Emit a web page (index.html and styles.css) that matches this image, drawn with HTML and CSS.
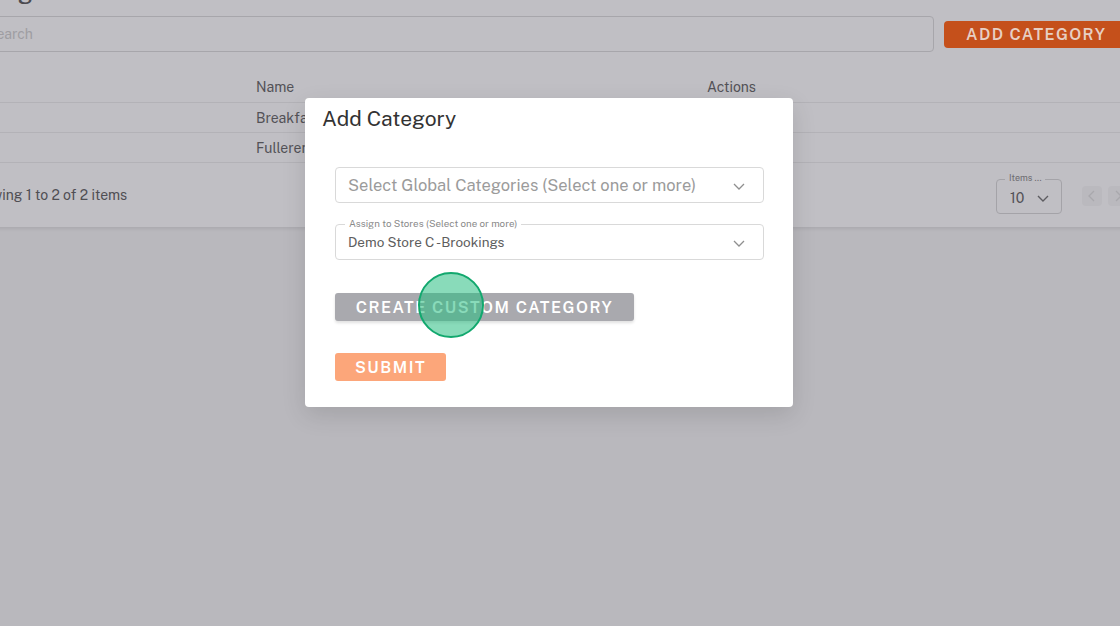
FILE: index.html
```html
<!DOCTYPE html>
<html>
<head>
<meta charset="utf-8">
<link rel="stylesheet" href="styles.css">
</head>
<body>
<div class="page">
  <div class="card">
    <h1 class="title">Categories</h1>
    <div class="toolbar">
      <div class="search">Search</div>
      <button class="btn-add">ADD CATEGORY</button>
    </div>
    <div class="table">
      <div class="row head"><div class="c1"></div><div class="c2">Name</div><div class="c3">Actions</div></div>
      <div class="row"><div class="c1"></div><div class="c2">Breakfast</div><div class="c3"></div></div>
      <div class="row"><div class="c1"></div><div class="c2">Fullerene</div><div class="c3"></div></div>
    </div>
    <div class="footer">
      <div class="showing">Showing 1 to 2 of 2 items</div>
      <div class="items">
        <span class="items-label">Items ...</span>
        <span class="items-val">10</span>
        <svg width="14" height="14" viewBox="0 0 14 14"><path d="M2 5l5 5 5-5" fill="none" stroke="#5d5c61" stroke-width="1.4"/></svg>
      </div>
      <div class="pager">
        <span class="pg"><svg width="10" height="14" viewBox="0 0 10 14"><path d="M7 2L2 7l5 5" fill="none" stroke="#a9a8ad" stroke-width="1.3"/></svg></span>
        <span class="pg"><svg width="10" height="14" viewBox="0 0 10 14"><path d="M3 2l5 5-5 5" fill="none" stroke="#a9a8ad" stroke-width="1.3"/></svg></span>
      </div>
    </div>
  </div>
</div>

<div class="modal">
  <h2 class="modal-title">Add Category</h2>
  <div class="form">
    <div class="select">
      <span class="placeholder">Select Global Categories (Select one or more)</span>
      <svg class="chev" width="14" height="14" viewBox="0 0 14 14"><path d="M2 5l5 5 5-5" fill="none" stroke="#8f8f8f" stroke-width="1.3"/></svg>
    </div>
    <div class="select outlined">
      <span class="legend">Assign to Stores (Select one or more)</span>
      <span class="value">Demo Store C -Brookings</span>
      <svg class="chev" width="14" height="14" viewBox="0 0 14 14"><path d="M2 5l5 5 5-5" fill="none" stroke="#8f8f8f" stroke-width="1.3"/></svg>
    </div>
    <button class="btn-custom">CREATE CUSTOM CATEGORY</button>
    <button class="btn-submit">SUBMIT</button>
  </div>
  <div class="click-dot"></div>
</div>
</body>
</html>
```

FILE: styles.css
```css
* { box-sizing: border-box; }
html, body { margin: 0; padding: 0; }
body {
  width: 1120px;
  height: 626px;
  overflow: hidden;
  background: #b9b8bd;
  font-family: "Public Sans", Inter, "Noto Sans", sans-serif;
  position: relative;
}
.page { width: 1120px; }
.card {
  margin: -40px -10px 0 -34px;
  background: #c0bfc4;
  box-shadow: 0 2px 3px rgba(0,0,0,0.08);
}
.title {
  margin: 0;
  height: 44px;
  line-height: 24px;
  padding-top: 19px;
  font-size: 24px;
  font-weight: 500;
  color: #4b4a4f;
  padding-left: 0;
}
.toolbar {
  display: flex;
  align-items: center;
  gap: 10px;
  height: 36px;
  margin-top: 12px;
}
.search {
  width: 968px;
  height: 36px;
  border: 1px solid #a7a6ab;
  border-radius: 4px;
  padding-left: 20px;
  line-height: 34px;
  font-size: 14px;
  color: #9e9da2;
}
.btn-add {
  height: 27px;
  width: 184px;
  border: 0;
  border-radius: 4px;
  background: #c5501b;
  color: #e7cfc3;
  font-family: inherit;
  font-size: 16px;
  font-weight: 600;
  letter-spacing: 1.4px;
  text-align: left;
  padding: 0 0 0 22px;
}
.table { margin-top: 20px; }
.row {
  display: flex;
  height: 30px;
  align-items: center;
  border-bottom: 1px solid #b3b2b7;
  font-size: 14px;
  color: #535257;
}
.row.head { height: 31px; }
.c1 { width: 290px; }
.c2 { width: 451px; }
.c3 { flex: 1; }
.footer {
  display: flex;
  align-items: center;
  height: 64px;
}
.showing {
  flex: 1;
  font-size: 14px;
  color: #4f4e53;
}
.items {
  position: relative;
  width: 66px;
  height: 35px;
  border: 1px solid #a4a3a8;
  border-radius: 4px;
  display: flex;
  align-items: center;
  padding-left: 13px;
  gap: 12px;
  margin-top: 2px;
  font-size: 14px;
  color: #535257;
}
.items-label {
  position: absolute;
  top: -8px;
  left: 8px;
  padding: 0 4px;
  background: #c0bfc4;
  font-size: 9px;
  color: #6c6b70;
  line-height: 12px;
}
.items-val { margin-top: 3px; }
.items svg { margin-top: 3px; }
.pager {
  display: flex;
  gap: 6px;
  margin-left: 20px;
  margin-right: 2px;
  margin-top: 2px;
}
.pg {
  width: 20px;
  height: 20px;
  border-radius: 4px;
  background: #bab9be;
  display: flex;
  align-items: center;
  justify-content: center;
}

.modal {
  position: absolute;
  left: 305px;
  top: 98px;
  width: 488px;
  height: 309px;
  background: #fff;
  border-radius: 4px;
  box-shadow: 0 8px 24px rgba(0,0,0,0.12);
}
.modal-title {
  margin: 0;
  padding: 9px 0 0 17px;
  font-size: 21px;
  font-weight: 400;
  color: #333;
  line-height: 24px;
}
.form {
  padding: 36px 30px 0 30px;
  display: flex;
  flex-direction: column;
  align-items: flex-start;
}
.select {
  position: relative;
  width: 429px;
  height: 36px;
  border: 1px solid #d9d9d9;
  border-radius: 4px;
  display: flex;
  align-items: center;
  padding-left: 12px;
}
.placeholder { font-size: 16.5px; color: #9b9b9b; }
.chev { position: absolute; right: 17px; top: 11px; }
.select.outlined { margin-top: 21px; }
.legend {
  position: absolute;
  top: -7px;
  left: 9px;
  padding: 0 4px;
  background: #fff;
  font-size: 9.8px;
  line-height: 12px;
  color: #8a8a8a;
}
.value { font-size: 13.5px; color: #5e5e5e; }
.btn-custom {
  margin-top: 33px;
  height: 28px;
  width: 299px;
  border: 0;
  border-radius: 3px;
  background: #a9a9ae;
  color: #fff;
  font-family: inherit;
  font-size: 16px;
  font-weight: 600;
  letter-spacing: 1.5px;
  box-shadow: 0 2px 3px rgba(0,0,0,0.12);
  padding: 0;
}
.btn-submit {
  margin-top: 32px;
  height: 28px;
  width: 111px;
  border: 0;
  border-radius: 3px;
  background: #fca67a;
  color: #fff;
  font-family: inherit;
  font-size: 16px;
  font-weight: 600;
  letter-spacing: 1.5px;
  padding: 0;
}
.click-dot {
  position: absolute;
  left: 113px;
  top: 174px;
  width: 66px;
  height: 66px;
  border-radius: 50%;
  border: 2.5px solid #12a86e;
  background: rgba(40, 190, 130, 0.55);
}
```
